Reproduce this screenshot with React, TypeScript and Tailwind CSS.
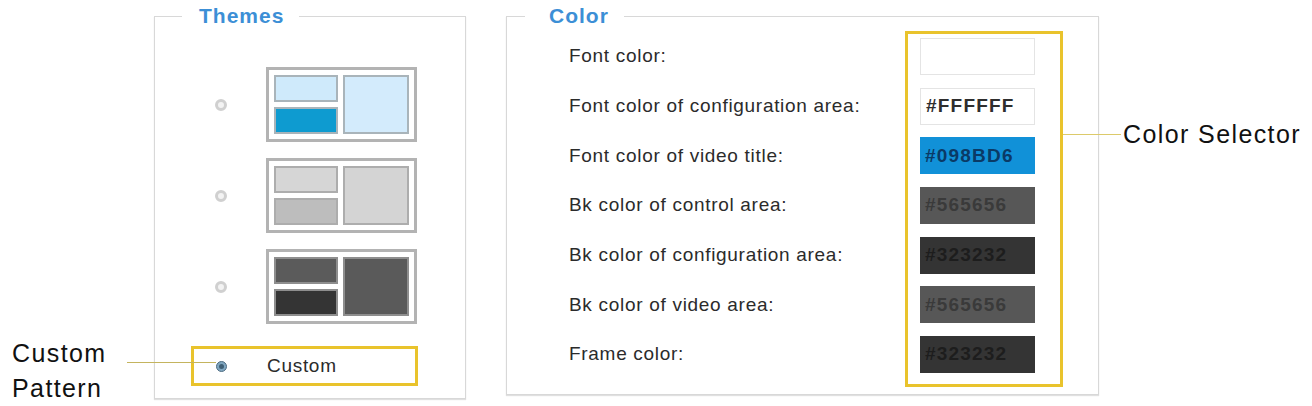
type Theme = {
  topLeft: string;
  bottomLeft: string;
  right: string;
  cellBorder: string;
};

const themes: Theme[] = [
  { topLeft: "bg-[#cfeafb]", bottomLeft: "bg-[#0e9bd0]", right: "bg-[#d3ebfc]", cellBorder: "border-[#a9b4ba]" },
  { topLeft: "bg-[#d6d6d6]", bottomLeft: "bg-[#bdbdbd]", right: "bg-[#d4d4d4]", cellBorder: "border-[#adadad]" },
  { topLeft: "bg-[#5b5b5b]", bottomLeft: "bg-[#343434]", right: "bg-[#5a5a5a]", cellBorder: "border-[#8e8e8e]" },
];

const colors = [
  { label: "Font color:", value: "", box: "bg-white border border-[#e4e4e4]", text: "text-[#333]" },
  { label: "Font color of configuration area:", value: "#FFFFFF", box: "bg-white border border-[#e4e4e4]", text: "text-[#2e2e2e]" },
  { label: "Font color of video title:", value: "#098BD6", box: "bg-[#1191d8]", text: "text-[#0a3a66]" },
  { label: "Bk color of control area:", value: "#565656", box: "bg-[#575757]", text: "text-[#3a3a3a]" },
  { label: "Bk color of configuration area:", value: "#323232", box: "bg-[#343434]", text: "text-[#1d1d1d]" },
  { label: "Bk color of video area:", value: "#565656", box: "bg-[#575757]", text: "text-[#3a3a3a]" },
  { label: "Frame color:", value: "#323232", box: "bg-[#343434]", text: "text-[#1d1d1d]" },
];

function Radio({ checked }: { checked?: boolean }) {
  if (checked) {
    return (
      <span className="flex h-[11px] w-[11px] shrink-0 items-center justify-center rounded-full border border-[#4d6c82] bg-[#7fa6c0]">
        <span className="h-[5px] w-[5px] rounded-full bg-[#3f5f75]" />
      </span>
    );
  }
  return (
    <span className="h-[12px] w-[12px] shrink-0 rounded-full border-[3px] border-[#d0d0d0] bg-[#f3f3f3]" />
  );
}

function Thumb({ theme }: { theme: Theme }) {
  return (
    <div className="flex h-[75px] w-[151px] gap-[5px] border-[3px] border-[#b3b3b3] bg-white p-[5px]">
      <div className="flex w-[64px] flex-col gap-[5px]">
        <div className={`flex-1 border-2 ${theme.cellBorder} ${theme.topLeft}`} />
        <div className={`flex-1 border-2 ${theme.cellBorder} ${theme.bottomLeft}`} />
      </div>
      <div className={`flex-1 border-2 ${theme.cellBorder} ${theme.right}`} />
    </div>
  );
}

export default function App() {
  return (
    <div className="relative flex h-[406px] w-[1312px] overflow-hidden bg-white font-['Liberation_Sans',Arial,sans-serif]">
      {/* left annotation */}
      <div className="w-[154px] shrink-0 pl-[12px] pt-[336px] text-[25px] leading-[35px] tracking-[1.4px] text-[#111]">
        <div>Custom</div>
        <div>Pattern</div>
      </div>

      <fieldset className="mt-[4px] h-[395px] w-[312px] shrink-0 border border-[#d8d8d8] shadow-[0_1px_1px_rgba(0,0,0,0.12)]">
        <legend className="ml-[27px] pl-[17px] pr-[15px] text-[21px] font-bold leading-[24px] tracking-[1px] text-[#3c8fd6]">
          Themes
        </legend>
        <div className="flex flex-col pt-[39px]">
          <div className="flex flex-col gap-[16px]">
            {themes.map((t, i) => (
              <div key={i} className="flex items-center pl-[60px]">
                <Radio />
                <div className="ml-[39px]">
                  <Thumb theme={t} />
                </div>
              </div>
            ))}
          </div>
          <div className="ml-[36px] mt-[22px] flex h-[40px] w-[227px] items-center border-[3px] border-[#e9c32c] pl-[22px]">
            <Radio checked />
            <span className="ml-[40px] text-[19px] tracking-[0.7px] text-[#2b2b2b]">Custom</span>
          </div>
        </div>
      </fieldset>

      <fieldset className="ml-[40px] mt-[4px] h-[391px] w-[593px] shrink-0 border border-[#d8d8d8] shadow-[0_1px_1px_rgba(0,0,0,0.12)]">
        <legend className="ml-[18px] pl-[24px] pr-[15px] text-[21px] font-bold leading-[24px] tracking-[1px] text-[#3c8fd6]">
          Color
        </legend>
        <div className="flex pl-[62px]">
          <div className="flex w-[336px] flex-col gap-[12.7px] pt-[10px]">
            {colors.map((c) => (
              <div key={c.label} className="flex h-[37px] items-center text-[19px] tracking-[0.7px] text-[#2b2b2b]">
                {c.label}
              </div>
            ))}
          </div>
          <div className="mt-[3px] flex h-[356px] w-[158px] flex-col gap-[12.7px] border-[3px] border-[#e9c32c] pl-[12px] pt-[4px]">
            {colors.map((c) => (
              <div
                key={c.label}
                className={`flex h-[37px] w-[115px] items-center pl-[5px] text-[19px] font-bold tracking-[1.2px] ${c.box} ${c.text}`}
              >
                {c.value}
              </div>
            ))}
          </div>
        </div>
      </fieldset>

      {/* right annotation */}
      <div className="ml-[24px] pt-[119px] text-[25px] leading-[30px] tracking-[1.4px] whitespace-nowrap text-[#111]">
        Color Selector
      </div>

      {/* connector lines */}
      <div className="absolute left-[127px] top-[362px] h-px w-[89px] bg-[#c4b45e]" />
      <div className="absolute left-[1063px] top-[134px] h-px w-[58px] bg-[#dcca6a]" />
    </div>
  );
}
